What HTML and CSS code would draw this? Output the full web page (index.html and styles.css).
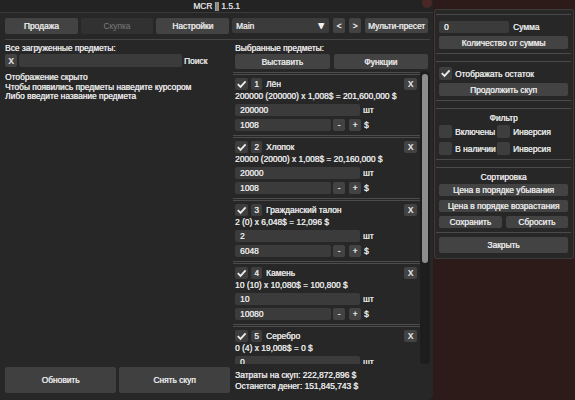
FILE: index.html
```html
<!DOCTYPE html>
<html lang="ru">
<head>
  <meta charset="UTF-8" />
  <meta name="viewport" content="width=device-width, initial-scale=1.0" />
  <title>MCR</title>
  <link rel="stylesheet" href="styles.css">
</head>
<body>
  <div class="desktop">
    <div class="window">
      <div class="titlebar">MCR || 1.5.1<span class="close-dot"></span></div>

      <div class="toolbar">
        <div class="tabs">
          <button class="btn tab">Продажа</button>
          <button class="btn tab tab-off">Скупка</button>
          <button class="btn tab">Настройки</button>
        </div>
        <div class="combo">Main<span class="combo-arrow">▼</span></div>
        <button class="btn arrow-btn">&lt;</button>
        <button class="btn arrow-btn">&gt;</button>
        <button class="btn preset-btn">Мульти-пресет</button>
      </div>

      <div class="hr"></div>

      <div class="panes">
        <div class="pane-left">
          <div class="label">Все загруженные предметы:</div>
          <div class="search-row">
            <button class="btn sq-btn">X</button>
            <div class="field search-field"></div>
            <span class="after">Поиск</span>
          </div>
          <div class="notes">
            <div>Отображение скрыто</div>
            <div>Чтобы появились предметы наведите курсором</div>
            <div>Либо введите название предмета</div>
          </div>
          <div class="bottom-btns">
            <button class="btn big-btn">Обновить</button>
            <button class="btn big-btn">Снять скуп</button>
          </div>
        </div>

        <div class="pane-mid">
          <div class="label">Выбранные предметы:</div>
          <div class="mid-btns">
            <button class="btn">Выставить</button>
            <button class="btn">Функции</button>
          </div>

          <div class="list">
            <div class="items">
              <div class="item">
                <div class="sep2"></div>
                <div class="item-head">
                  <span class="check"><svg viewBox="0 0 13 12" width="13" height="12"><path d="M2.8 6.2 L5.5 8.9 L10.6 3.3" fill="none" stroke="#ececec" stroke-width="1.8"/></svg></span>
                  <span class="num">1</span>
                  <span class="name">Лён</span>
                  <button class="btn sq-btn close-btn">X</button>
                </div>
                <div class="calc">200000 (200000) x 1,008$ = 201,600,000 $</div>
                <div class="row row-qty"><div class="field qty">200000</div><span class="after">шт</span></div>
                <div class="row"><div class="field price">1008</div><button class="btn step minus">-</button><button class="btn step">+</button><span class="after">$</span></div>
              </div>

              <div class="item">
                <div class="sep2"></div>
                <div class="item-head">
                  <span class="check"><svg viewBox="0 0 13 12" width="13" height="12"><path d="M2.8 6.2 L5.5 8.9 L10.6 3.3" fill="none" stroke="#ececec" stroke-width="1.8"/></svg></span>
                  <span class="num">2</span>
                  <span class="name">Хлопок</span>
                  <button class="btn sq-btn close-btn">X</button>
                </div>
                <div class="calc">20000 (20000) x 1,008$ = 20,160,000 $</div>
                <div class="row row-qty"><div class="field qty">20000</div><span class="after">шт</span></div>
                <div class="row"><div class="field price">1008</div><button class="btn step minus">-</button><button class="btn step">+</button><span class="after">$</span></div>
              </div>

              <div class="item">
                <div class="sep2"></div>
                <div class="item-head">
                  <span class="check"><svg viewBox="0 0 13 12" width="13" height="12"><path d="M2.8 6.2 L5.5 8.9 L10.6 3.3" fill="none" stroke="#ececec" stroke-width="1.8"/></svg></span>
                  <span class="num">3</span>
                  <span class="name">Гражданский талон</span>
                  <button class="btn sq-btn close-btn">X</button>
                </div>
                <div class="calc">2 (0) x 6,048$ = 12,096 $</div>
                <div class="row row-qty"><div class="field qty">2</div><span class="after">шт</span></div>
                <div class="row"><div class="field price">6048</div><button class="btn step minus">-</button><button class="btn step">+</button><span class="after">$</span></div>
              </div>

              <div class="item">
                <div class="sep2"></div>
                <div class="item-head">
                  <span class="check"><svg viewBox="0 0 13 12" width="13" height="12"><path d="M2.8 6.2 L5.5 8.9 L10.6 3.3" fill="none" stroke="#ececec" stroke-width="1.8"/></svg></span>
                  <span class="num">4</span>
                  <span class="name">Камень</span>
                  <button class="btn sq-btn close-btn">X</button>
                </div>
                <div class="calc">10 (10) x 10,080$ = 100,800 $</div>
                <div class="row row-qty"><div class="field qty">10</div><span class="after">шт</span></div>
                <div class="row"><div class="field price">10080</div><button class="btn step minus">-</button><button class="btn step">+</button><span class="after">$</span></div>
              </div>

              <div class="item">
                <div class="sep2"></div>
                <div class="item-head">
                  <span class="check"><svg viewBox="0 0 13 12" width="13" height="12"><path d="M2.8 6.2 L5.5 8.9 L10.6 3.3" fill="none" stroke="#ececec" stroke-width="1.8"/></svg></span>
                  <span class="num">5</span>
                  <span class="name">Серебро</span>
                  <button class="btn sq-btn close-btn">X</button>
                </div>
                <div class="calc">0 (4) x 19,008$ = 0 $</div>
                <div class="row row-qty"><div class="field qty">0</div><span class="after">шт</span></div>
              </div>
            </div>
            <div class="track"><div class="thumb"></div></div>
          </div>

          <div class="summary">
            <div>Затраты на скуп: 222,872,896 $</div>
            <div>Останется денег: 151,845,743 $</div>
          </div>
        </div>
      </div>
    </div>

    <div class="side">
      <div class="sep"></div>
      <div class="sum-row">
        <div class="field sum-field">0</div>
        <span class="after">Сумма</span>
      </div>
      <button class="btn side-btn">Количество от суммы</button>
      <div class="sep"></div>
      <div class="sep sep-next"></div>

      <div class="check-row">
        <span class="check"><svg viewBox="0 0 13 12" width="13" height="12"><path d="M2.8 6.2 L5.5 8.9 L10.6 3.3" fill="none" stroke="#ececec" stroke-width="1.8"/></svg></span>
        <span class="after">Отображать остаток</span>
      </div>
      <button class="btn side-btn">Продолжить скуп</button>
      <div class="sep"></div>
      <div class="sep sep-next"></div>

      <div class="caption">Фильтр</div>
      <div class="filter-grid">
        <div class="check-row"><span class="check"></span><span class="after">Включены</span></div>
        <div class="check-row"><span class="check"></span><span class="after">Инверсия</span></div>
        <div class="check-row"><span class="check"></span><span class="after">В наличии</span></div>
        <div class="check-row"><span class="check"></span><span class="after">Инверсия</span></div>
      </div>
      <div class="sep"></div>
      <div class="sep sep-next"></div>

      <div class="caption">Сортировка</div>
      <button class="btn side-btn sort-btn">Цена в порядке убывания</button>
      <button class="btn side-btn sort-btn">Цена в порядке возрастания</button>
      <div class="pair">
        <button class="btn">Сохранить</button>
        <button class="btn">Сбросить</button>
      </div>
      <div class="sep"></div>
      <button class="btn side-btn close-side">Закрыть</button>
    </div>
  </div>
</body>
</html>
```

FILE: styles.css
```css
* {
  box-sizing: border-box;
  margin: 0;
  padding: 0;
}

body {
  background-color: #2c1b19;
  color: #e6e6e6;
  font-family: 'Liberation Sans', Arial, sans-serif;
  font-size: 8.4px;
  line-height: 10px;
  text-shadow: 0.35px 0 0 currentColor;
  white-space: nowrap;
  overflow: hidden;
}

.desktop {
  display: flex;
  align-items: flex-start;
  height: 400px;
}

/* main window */
.window {
  width: 433px;
  height: 400px;
  background-color: #272727;
  padding: 0 3px 0 5px;
  display: flex;
  flex-direction: column;
  border-radius: 0 0 5px 0;
}

.titlebar {
  height: 13px;
  margin: 0 -3px 0 -5px;
  background-color: #232323;
  border-bottom: 1px solid #3a3a3a;
  text-align: center;
  line-height: 12px;
  color: #dcdcdc;
  position: relative;
}

.close-dot {
  position: absolute;
  right: 1px;
  top: -3px;
  width: 10px;
  height: 11px;
  border-radius: 50%;
  background-color: rgba(120, 45, 45, 0.45);
}

.btn {
  border: none;
  font: inherit;
  color: inherit;
  text-shadow: inherit;
  background-color: #434343;
  border-radius: 2px;
  display: flex;
  align-items: center;
  justify-content: center;
}

.field {
  background-color: #3b3b3b;
  border-radius: 2px;
  padding-left: 5px;
  display: flex;
  align-items: center;
}

.after {
  margin-left: 4px;
}

.toolbar {
  display: flex;
  height: 16px;
  margin-top: 5px;
}

.tabs {
  display: flex;
  gap: 3px;
  width: 224px;
}

.tab {
  flex: 1;
}

.tab-off {
  background-color: #313131;
  color: #7c7c7c;
  text-shadow: none;
}

.combo {
  width: 97px;
  margin-left: 3px;
  height: 15px;
  background-color: #3b3b3b;
  border-radius: 2px;
  padding: 0 3px 0 4px;
  display: flex;
  align-items: center;
  justify-content: space-between;
}

.combo-arrow {
  font-size: 10px;
  color: #f0f0f0;
}

.arrow-btn {
  width: 12px;
  height: 15px;
  margin-left: 4px;
}

.preset-btn {
  width: 63px;
  height: 15px;
  margin-left: 4px;
}

.hr {
  height: 1px;
  margin-top: 5px;
  background-color: #454545;
}

.panes {
  display: flex;
  gap: 2px;
  flex: 1;
}

.label {
  margin-top: 3px;
  line-height: 10px;
}

/* left pane */
.pane-left {
  width: 225px;
  display: flex;
  flex-direction: column;
}

.search-row {
  display: flex;
  align-items: center;
  height: 13px;
  margin-top: 1px;
}

.sq-btn {
  width: 12px;
  height: 13px;
}

.search-field {
  width: 163px;
  height: 13px;
  margin-left: 2px;
}

.search-row .after {
  margin-left: 2px;
}

.notes {
  margin-top: 6px;
  line-height: 9.5px;
}

.bottom-btns {
  margin-top: auto;
  margin-bottom: 7px;
  display: flex;
  gap: 3px;
}

.big-btn {
  flex: 1;
  height: 26px;
  background-color: #404040;
}

/* middle pane */
.pane-mid {
  width: 198px;
  display: flex;
  flex-direction: column;
}

.pane-mid .label {
  padding-left: 3px;
}

.mid-btns {
  display: flex;
  gap: 4px;
  margin: 1px 2px 0 3px;
  height: 15px;
}

.mid-btns .btn {
  flex: 1;
}

.list {
  display: flex;
  height: 293px;
  margin-top: 2px;
}

.items {
  flex: 1;
  padding: 1px 3px 0;
  overflow: hidden;
}

.item {
  height: 63px;
}

.sep2 {
  height: 3px;
  margin: 0 -3px 0 -2px;
  border-top: 1px solid #4c4c4c;
  border-bottom: 1px solid #4c4c4c;
}

.item-head {
  display: flex;
  align-items: center;
  height: 12px;
  margin-top: 3px;
}

.check {
  width: 13px;
  height: 12px;
  background-color: #3e3e3e;
  border-radius: 2px;
  display: flex;
  flex-shrink: 0;
}

.num {
  width: 11px;
  height: 12px;
  margin-left: 3px;
  background-color: #3e3e3e;
  border-radius: 2px;
  text-align: center;
  line-height: 12px;
}

.name {
  margin-left: 4px;
}

.close-btn {
  margin-left: auto;
  width: 13px;
  height: 12px;
}

.calc {
  line-height: 13px;
}

.row {
  display: flex;
  align-items: center;
  height: 12px;
  margin-top: 3px;
}

.row-qty {
  margin-top: 1px;
}

.qty {
  width: 125px;
  height: 12px;
}

.price {
  width: 96px;
  height: 12px;
}

.step {
  width: 12px;
  height: 12px;
  margin-left: 4px;
}

.step.minus {
  margin-left: 2px;
}

.row .after {
  margin-left: 3px;
}

.track {
  width: 10px;
  background-color: #1d1d1d;
  border-radius: 4px;
  padding: 3px 2px 0;
}

.thumb {
  height: 189px;
  background-color: #8d8d8d;
  border-radius: 3px;
}

.summary {
  margin-top: 6px;
  padding-left: 3px;
  line-height: 11px;
}

/* side panel */
.side {
  width: 140px;
  height: 250px;
  margin-top: 9px;
  margin-left: 1px;
  background-color: #272727;
  border: 1px solid #3b3b3b;
  border-radius: 2px;
  padding: 0 5px 0 4px;
  display: flex;
  flex-direction: column;
}

.sep {
  height: 1px;
  margin: 4px -3px 0;
  background-color: #4a4a4a;
}

.sep-next {
  margin-top: 7px;
}

.sum-row {
  display: flex;
  align-items: center;
  height: 12px;
  margin-top: 6px;
}

.sum-field {
  width: 70px;
  height: 12px;
}

.side-btn {
  height: 13px;
  margin-top: 3px;
}

.check-row {
  display: flex;
  align-items: center;
  height: 13px;
}

.check-row .check {
  height: 13px;
}

.check-row .after {
  margin-left: 3px;
}

.side > .check-row {
  margin-top: 5px;
}

.caption {
  margin-top: 4px;
  text-align: center;
  line-height: 10px;
}

.filter-grid {
  display: grid;
  grid-template-columns: 58px auto;
  row-gap: 4px;
  margin-top: 2px;
}

.sort-btn {
  height: 12px;
  margin-top: 4px;
}

.caption + .sort-btn {
  margin-top: 2px;
}

.pair {
  display: flex;
  gap: 4px;
  height: 12px;
  margin-top: 4px;
}

.pair .btn {
  flex: 1;
}

.close-side {
  height: 16px;
  margin-top: 4px;
}
```
